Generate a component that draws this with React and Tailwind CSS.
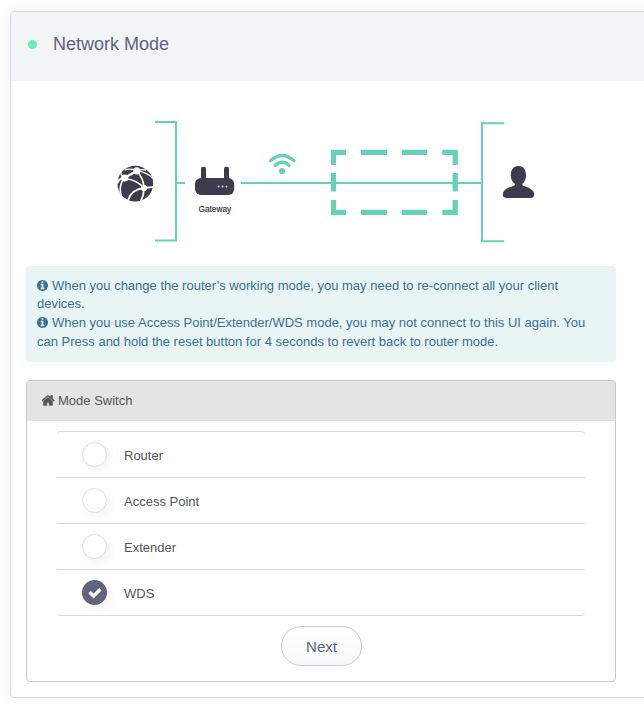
import React from "react";

function InfoIcon() {
  return (
    <svg className="mr-[4px] -mt-[2px] inline-block h-[11px] w-[11px] fill-current align-middle" viewBox="128 128 1536 1536">
      <path d="M1152 1376v-160q0-14-9-23t-23-9h-96v-512q0-14-9-23t-23-9h-320q-14 0-23 9t-9 23v160q0 14 9 23t23 9h96v320h-96q-14 0-23 9t-9 23v160q0 14 9 23t23 9h448q14 0 23-9t9-23zm-128-896v-160q0-14-9-23t-23-9h-192q-14 0-23 9t-9 23v160q0 14 9 23t23 9h192q14 0 23-9t9-23zm640 416q0 209-103 385.5t-279.5 279.5-385.5 103-385.5-103-279.5-279.5-103-385.5 103-385.5 279.5-279.5 385.5-103 385.5 103 279.5 279.5 103 385.5z" />
    </svg>
  );
}

function HomeIcon() {
  return (
    <svg className="mr-[3px] -mt-px h-[13px] w-[13px] fill-current" viewBox="90 100 1612 1612">
      <path d="M1408 992v480q0 26-19 45t-45 19h-384v-384h-256v384h-384q-26 0-45-19t-19-45v-480q0-1 .5-3t.5-3l575-474 575 474q1 2 1 6zm223-69l-62 74q-8 9-21 11h-3q-13 0-21-7l-692-577-692 577q-12 8-24 7-13-2-21-11l-62-74q-8-10-7-23.5t11-21.5l719-599q32-26 76-26t76 26l244 204v-195q0-14 9-23t23-9h192q14 0 23 9t9 23v408l219 182q10 8 11 21.5t-7 23.5z" stroke="currentColor" strokeWidth="40" />
    </svg>
  );
}

function CheckIcon() {
  return (
    <svg className="mt-px h-[14px] w-[14px] fill-white" viewBox="0 0 1792 1792">
      <path d="M1671 566q0 40-28 68l-724 724-136 136q-28 28-68 28t-68-28l-136-136-362-362q-28-28-28-68t28-68l136-136q28-28 68-28t68 28l294 295 656-657q28-28 68-28t68 28l136 136q28 28 28 68z" stroke="#fff" strokeWidth="70" />
    </svg>
  );
}

function NetworkDiagram() {
  return (
    <svg className="block h-[185px] w-[590px]" viewBox="26 81 590 185">
      <defs>
        <clipPath id="globe">
          <circle cx="135.3" cy="183.7" r="18.2" />
        </clipPath>
      </defs>

      <g fill="none" stroke="#66d1b9" strokeWidth="2">
        <path d="M155 122H176V240.5H155M176 183H185" />
        <path d="M241 183H482M504 123.3H482V241.3H504" />
      </g>
      <g fill="#66d1b9">
        <path d="M331 149.8H346V155H336V165H331zM331 215V200H336V209.8H346V215z" />
        <path d="M457.8 149.8H442.3V155H452.6V165H457.8zM457.8 215V200H452.6V209.8H442.3V215z" />
        <path d="M331 173h5v18.6h-5zM452.6 173h5.2v18.6h-5.2z" />
        <path d="M361 149.8h26v5.2h-26zM402 149.8h25v5.2h-25zM361 209.8h26v5.2h-26zM402 209.8h25v5.2h-25z" />
        <circle cx="282.1" cy="171" r="3.1" />
      </g>
      <g fill="none" stroke="#66d1b9" strokeWidth="3.2" strokeLinecap="round">
        <path d="M270.5 160.7Q282.1 150.3 294 160.7" />
        <path d="M275.2 165.4Q282.1 158.9 289.2 165.4" />
      </g>

      <circle cx="135.3" cy="183.7" r="17.9" fill="#3d3b4e" />
      <g clipPath="url(#globe)">
        <g fill="none" stroke="#fff" strokeWidth="1.3">
          <path d="M125 169.8Q131 168.3 136.3 170.5Q142 169 146 170" />
          <path d="M136.3 171L125 177.7" strokeWidth="2.4" />
          <path d="M124.2 178Q117.5 187 122 198" strokeWidth="1.7" />
          <path d="M125 178.5Q137 180 144 188" strokeWidth="1.7" />
          <path d="M136.8 171Q143.5 178 144 188" strokeWidth="1.7" />
          <path d="M144 188Q131 189.5 128 200.5" strokeWidth="1.8" />
          <path d="M144 188Q144.2 195 140.5 202" strokeWidth="1.8" />
          <path d="M144 188L154 186.8" strokeWidth="1.8" />
          <path d="M137 170.7Q147 172.5 152.5 178" />
          <path d="M125 177.5Q118.5 178 117 184" strokeWidth="1.9" />
          <path d="M124.5 178Q120.5 176 121 172" />
        </g>
        <g fill="#fff">
          <circle cx="136.7" cy="170.8" r="3.6" />
          <circle cx="124.7" cy="178" r="3.6" />
          <circle cx="144" cy="188" r="3.1" />
        </g>
      </g>

      <g fill="#3d3b4e">
        <rect x="195" y="178" width="39.2" height="17" rx="6" />
        <rect x="201" y="166.8" width="5" height="14" rx="2" />
        <rect x="224" y="166.8" width="5" height="14" rx="2" />
        <path d="M518.4 166C523.6 166 526 170 526 175.2C526 179 525 181.5 522.4 183.8V185.2C524 186.4 530 187.2 533 191C534.4 193 534.6 194.6 533.8 196.2Q533 198 530.6 198H506.8Q503.8 198 503.1 196.2C502.4 194.4 502.8 192.6 504.2 190.8C507.2 187.2 513 186.4 514.8 185.2V183.8C512 181.5 510.8 179 510.8 175.2C510.8 170 513.2 166 518.4 166z" />
      </g>
      <g fill="#fff">
        <circle cx="218.5" cy="186.5" r="0.95" />
        <circle cx="222.5" cy="186.5" r="0.95" />
        <circle cx="226.5" cy="186.5" r="0.95" />
      </g>
      <text x="198.6" y="211.9" textLength="32.5" lengthAdjust="spacingAndGlyphs" fill="#2b2a35" stroke="#2b2a35" strokeWidth="0.15" className="font-['Liberation_Sans',sans-serif] text-[9px]">
        Gateway
      </text>
    </svg>
  );
}

const modes = [
  { name: "Router", selected: false },
  { name: "Access Point", selected: false },
  { name: "Extender", selected: false },
  { name: "WDS", selected: true },
];

function ModeRow({ name, selected }) {
  return (
    <li className="flex h-[46px] items-center border-b border-[#dadbdc] pl-[25px] last:rounded-b-[4px]">
      <span
        className={
          selected
            ? "flex h-[25px] w-[25px] items-center justify-center rounded-full bg-[#62647f] shadow-[4px_4px_10px_rgba(0,0,0,0.05)]"
            : "h-[25px] w-[25px] rounded-full border border-[#dddddd] bg-white shadow-[4px_4px_10px_rgba(0,0,0,0.05)]"
        }
      >
        {selected && <CheckIcon />}
      </span>
      <span className="ml-[17px] pt-[4px]">{name}</span>
    </li>
  );
}

export default function App() {
  return (
    <div className="h-[704px] w-[644px] overflow-hidden bg-[#fefefe] pl-[10px] pt-[11px] font-['Liberation_Sans',Arial,sans-serif] text-[13px] leading-[18.57px] text-[#555555]">
      <main className="h-[687px] w-[660px] rounded-[4px] border border-[#d9dbde] bg-white shadow-[0_0_16px_rgba(0,0,0,0.04)]">
        <header className="flex h-[69px] items-center rounded-t-[3px] bg-[#f3f4f6] pb-[4px] pl-[17px]">
          <span className="h-[9px] w-[9px] rounded-full bg-[#63f2b8]" />
          <h1 className="ml-[16px] pb-[2px] text-[18px] leading-6 text-[#5f6183]">Network Mode</h1>
        </header>
        <div className="w-[605px] pl-[15px]">
          <NetworkDiagram />
          <div className="h-[96px] rounded-[4px] bg-[#e9f4f4] px-[11px] pt-[10.7px] text-[#3a7194]">
            <p>
              <InfoIcon />
              When you change the router’s working mode, you may need to re-connect all your client
              <br />
              devices.
            </p>
            <p className="-mt-px leading-[19px]">
              <InfoIcon />
              When you use Access Point/Extender/WDS mode, you may not connect to this UI again. You
              <br />
              can Press and hold the reset button for 4 seconds to revert back to router mode.
            </p>
          </div>
          <section className="mt-[18px] h-[302px] rounded-[4px] border border-[#c8c8c8] bg-white">
            <h2 className="flex h-[40px] items-center rounded-t-[3px] bg-[#e4e4e4] pl-[15px]">
              <HomeIcon />
              Mode Switch
            </h2>
            <ul className="mx-[30px] mt-[10px] rounded-[4px] border-t border-[#dadbdc]">
              {modes.map((mode) => (
                <ModeRow key={mode.name} name={mode.name} selected={mode.selected} />
              ))}
            </ul>
            <div className="mt-[10px] flex justify-center">
              <button className="h-[40px] w-[81px] rounded-full border border-[#c5cdd6] bg-linear-to-b from-white to-[#f7f8f9] pl-px pt-[2px] text-[15px] text-[#5f6183]">
                Next
              </button>
            </div>
          </section>
        </div>
      </main>
    </div>
  );
}
